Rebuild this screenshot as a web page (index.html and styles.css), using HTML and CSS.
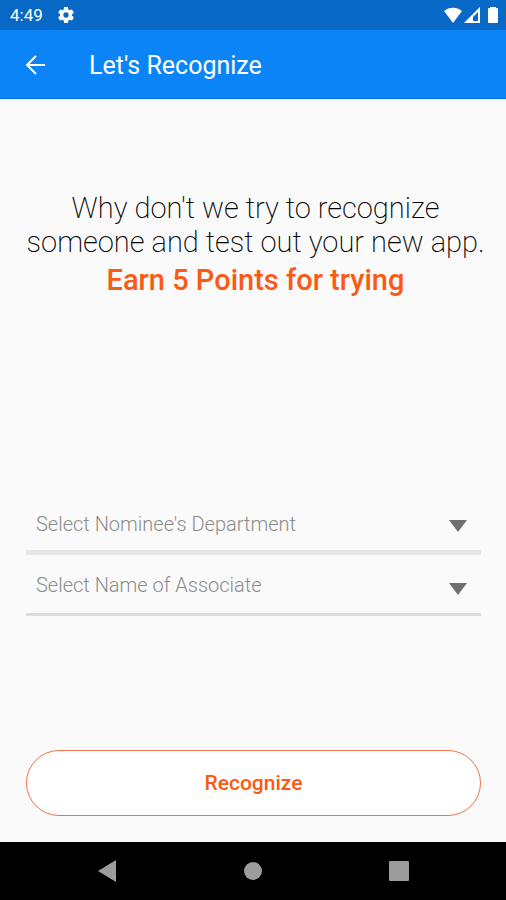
FILE: index.html
```
<!DOCTYPE html>
<html lang="en">
<head>
    <meta charset="UTF-8">
    <meta name="viewport" content="width=device-width, initial-scale=1.0">
    <title>Let's Recognize</title>
    <link rel="stylesheet" href="styles.css">
</head>
<body>
    <div class="status-bar">
        <span class="time">4:49</span>
        <svg class="gear" width="20" height="20" viewBox="0 0 24 24" fill="#fff"><path d="M19.14 12.94c.04-.3.06-.61.06-.94s-.02-.64-.07-.94l2.03-1.58a.49.49 0 0 0 .12-.61l-1.92-3.32a.49.49 0 0 0-.59-.22l-2.39.96a7 7 0 0 0-1.62-.94l-.36-2.54a.48.48 0 0 0-.48-.41h-3.84a.48.48 0 0 0-.47.41l-.36 2.54c-.59.24-1.13.57-1.62.94l-2.39-.96a.48.48 0 0 0-.59.22L2.74 8.87a.48.48 0 0 0 .12.61l2.03 1.58a6 6 0 0 0 0 1.88l-2.03 1.58a.49.49 0 0 0-.12.61l1.92 3.32c.12.22.37.29.59.22l2.39-.96c.5.38 1.03.7 1.62.94l.36 2.54c.05.24.24.41.48.41h3.84c.24 0 .44-.17.47-.41l.36-2.54a7 7 0 0 0 1.62-.94l2.39.96c.22.08.47 0 .59-.22l1.92-3.32a.48.48 0 0 0-.12-.61zM12 15.2a3.2 3.2 0 1 1 0-6.4 3.2 3.2 0 0 1 0 6.4z"/></svg>
        <div class="status-icons">
            <svg width="20" height="16" viewBox="0 0 20 16" fill="#fff"><path d="M10 16L1 4C6-.5 14-.5 19 4z"/></svg>
            <svg width="16" height="16" viewBox="0 0 16 16" fill="#fff"><path d="M0 16L16 0v16zM5 14h4V8l5-3v9z" fill-rule="evenodd" opacity=".35"/><path d="M0 16L16 0v16h-2V5L9 10v4h5v2z"/></svg>
            <svg class="battery" width="10" height="16" viewBox="0 0 10 16" fill="#fff"><path d="M2 0h6v1h1q1 0 1 1v13q0 1-1 1H1q-1 0-1-1V2q0-1 1-1h1z"/></svg>
        </div>
    </div>

    <header class="app-bar">
        <button class="back-btn" aria-label="Back">
            <svg width="20" height="20" viewBox="0 0 20 20" fill="none" stroke="#fff" stroke-width="2"><path d="M20 10H2M11 1l-9 9 9 9"/></svg>
        </button>
        <h1>Let's Recognize</h1>
    </header>

    <main>
        <div class="intro">
            <p>Why don't we try to recognize someone and test out your new app.</p>
            <p class="points">Earn 5 Points for trying</p>
        </div>

        <form class="nominee-form">
            <div class="field department">
                <select aria-label="Select Nominee's Department">
                    <option>Select Nominee's Department</option>
                </select>
                <svg class="caret" width="20" height="12" viewBox="0 0 20 12"><path d="M1 0h18l-9 12z" fill="#6f6f6f"/></svg>
            </div>
            <div class="field">
                <select aria-label="Select Name of Associate">
                    <option>Select Name of Associate</option>
                </select>
                <svg class="caret" width="20" height="12" viewBox="0 0 20 12"><path d="M1 0h18l-9 12z" fill="#6f6f6f"/></svg>
            </div>
            <button type="button" class="recognize-btn">Recognize</button>
        </form>
    </main>

    <nav class="nav-bar">
        <button aria-label="Back"><svg width="20" height="22" viewBox="0 0 20 22" fill="#9c9c9c"><path d="M19 0v22L1 11z"/></svg></button>
        <button aria-label="Home"><svg width="20" height="20" viewBox="0 0 20 20" fill="#9c9c9c"><circle cx="10" cy="10" r="9"/></svg></button>
        <button aria-label="Recent apps"><svg width="20" height="20" viewBox="0 0 20 20" fill="#9c9c9c"><rect width="20" height="20" rx="1"/></svg></button>
    </nav>
</body>
</html>
```
FILE: styles.css
```
* {
    box-sizing: border-box;
}

body {
    display: flex;
    flex-direction: column;
    min-height: 100vh;
    margin: 0;
    font-family: Roboto, sans-serif;
    background: #fafafa;
    color: #000;
}

h1, p {
    margin: 0;
}

button {
    padding: 0;
    border: none;
    background: none;
    cursor: pointer;
}

svg {
    display: block;
}

.status-bar {
    display: flex;
    align-items: center;
    height: 30px;
    padding: 0 8px 0 10px;
    background: #0868c5;
    color: #fff;
}

.time {
    font-size: 17px;
}

.gear {
    margin-left: 13px;
}

.status-icons {
    display: flex;
    gap: 1px;
    margin-left: auto;
}

.battery {
    margin-left: 7px;
}

.app-bar {
    display: flex;
    align-items: center;
    height: 69px;
    padding: 3px 25px 0;
    background: #0a84f7;
    border-bottom: 1px solid #0870df;
    color: #fff;
}

.back-btn {
    margin-bottom: 2px;
}

.app-bar h1 {
    margin-left: 44px;
    font-size: 25px;
    font-weight: 400;
}

main {
    display: flex;
    flex: 1;
    flex-direction: column;
    justify-content: space-between;
    padding: 92px 25px 26px 26px;
}

.intro {
    margin: 0 -10px 0 -6px;
    text-align: center;
    font-size: 29px;
    font-weight: 200;
    line-height: 34px;
}

.intro .points {
    margin-top: 4px;
    color: #fb5a14;
    font-size: 29px;
    font-weight: 500;
}

.field {
    position: relative;
    border-bottom: 3px solid #dcdcdc;
}

.department {
    border-bottom: 5px solid #e6e6e6;
}

.field select {
    display: block;
    width: 100%;
    height: 58px;
    padding: 2px 40px 0 10px;
    border: none;
    background: none;
    appearance: none;
    color: #8c8c8c;
    font-family: inherit;
    font-size: 20px;
    font-weight: 300;
}

.department select {
    padding-top: 6px;
}

.caret {
    position: absolute;
    top: 28px;
    right: 13px;
    pointer-events: none;
}

.recognize-btn {
    display: block;
    width: 100%;
    height: 66px;
    margin-top: 134px;
    border: 1px solid #f5704a;
    border-radius: 33px;
    background: #fff;
    color: #f95a14;
    font-family: inherit;
    font-size: 21px;
    font-weight: 500;
}

.nav-bar {
    display: flex;
    align-items: center;
    justify-content: space-around;
    height: 58px;
    padding: 0 34px;
    background: #000;
}

.nav-bar button {
    display: flex;
    align-items: center;
    justify-content: center;
    width: 32px;
    height: 32px;
}
```
